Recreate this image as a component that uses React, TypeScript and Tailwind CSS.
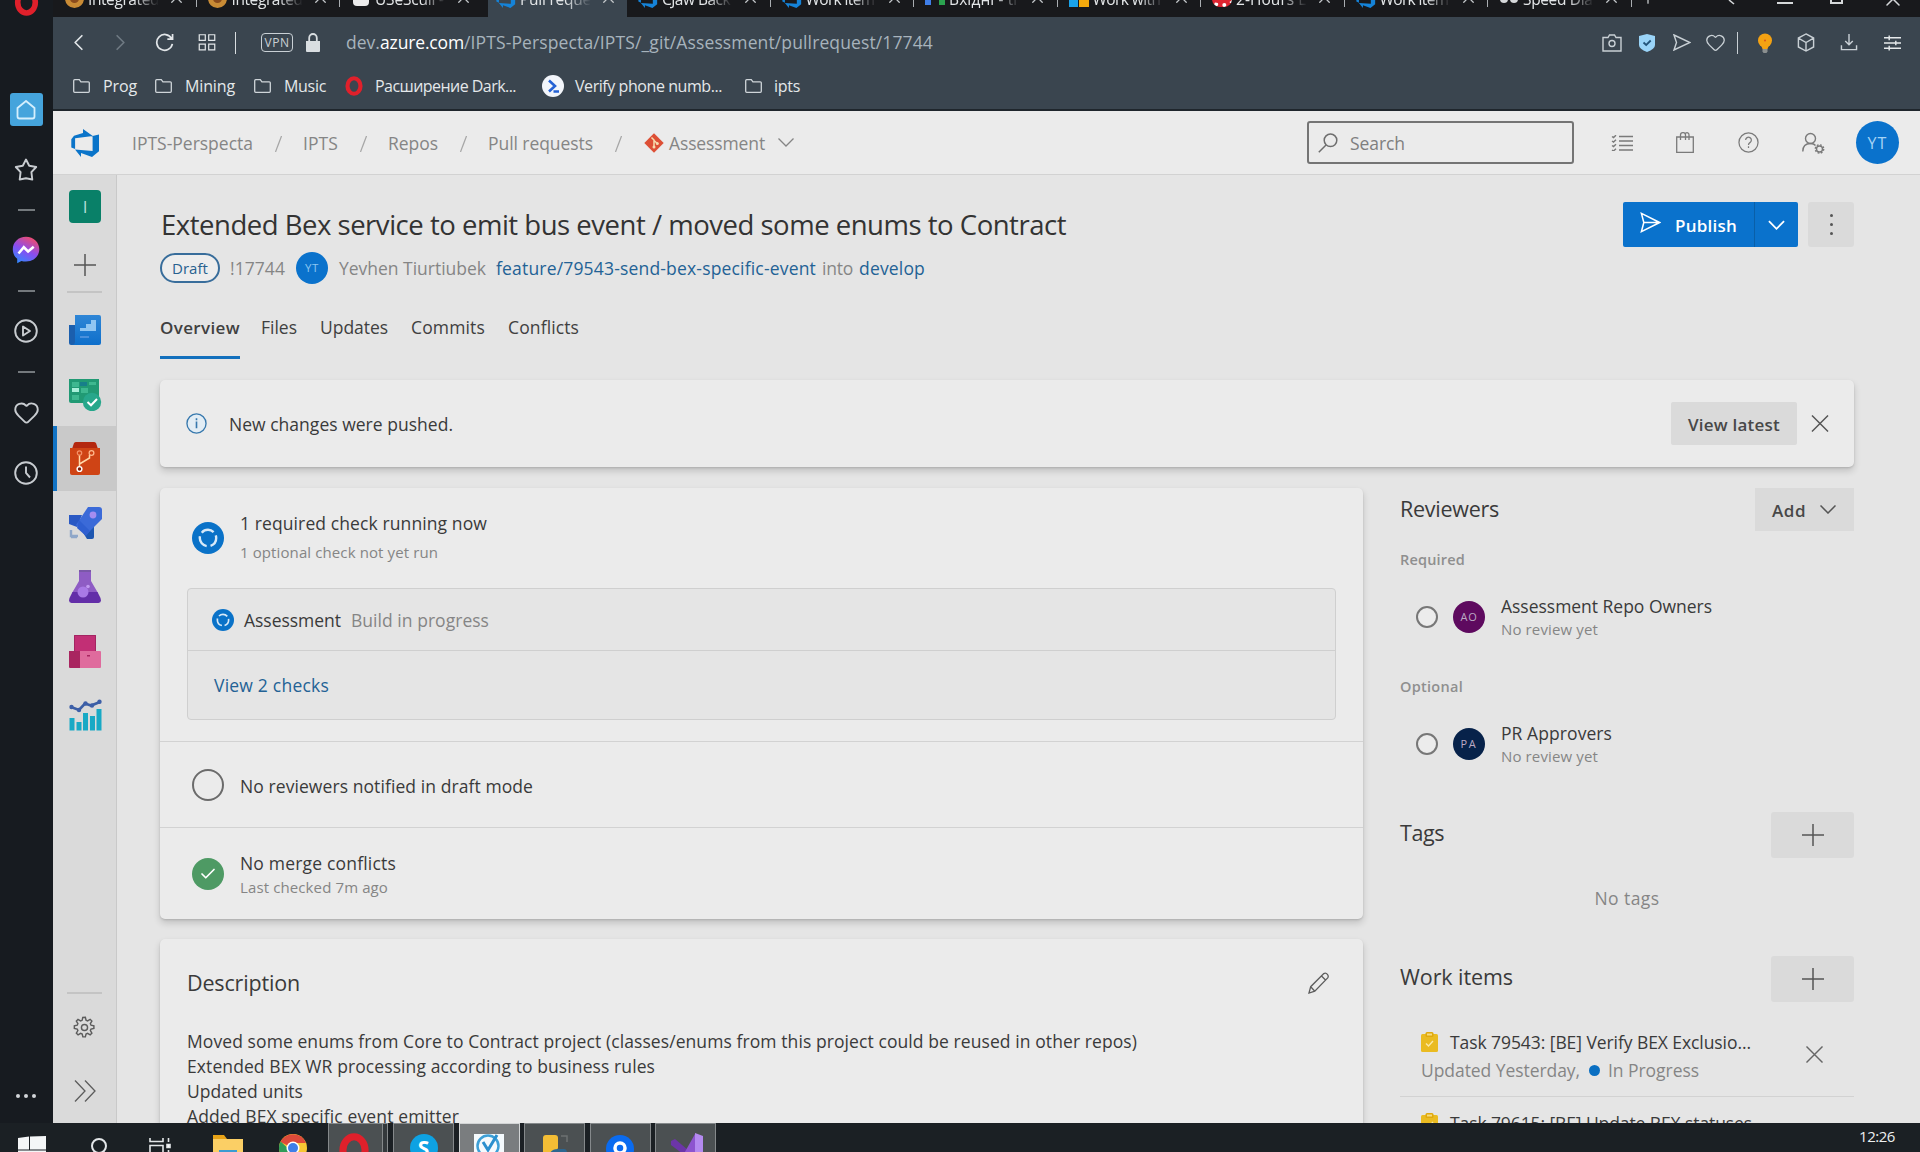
import React, { useLayoutEffect, useRef, useState } from "react";
import { Check, ChevronLeft, ChevronRight, Heart, Plus, X } from "lucide-react";

type TextProps = { w: number; children: string; className?: string };

/* Single-line label whose tracking adapts so that it fills the given width. */
function Label({ w, children, className = "" }: TextProps) {
  const ref = useRef<HTMLSpanElement>(null);
  const [spacing, setSpacing] = useState(0);
  useLayoutEffect(() => {
    if (ref.current) {
      const natural = ref.current.getBoundingClientRect().width;
      setSpacing((w - natural) / children.length);
    }
  }, [w, children]);
  return (
    <span className={"block shrink-0 whitespace-pre " + className} style={{ width: w }}>
      <span ref={ref} className="inline-block" style={{ letterSpacing: spacing + "px" }}>
        {children}
      </span>
    </span>
  );
}

/* ---------- icons ---------- */

const OperaO = ({ className = "" }) => (
  <svg viewBox="0 0 24 24" className={className}>
    <ellipse cx="12" cy="12" rx="7.8" ry="9.3" fill="none" stroke="#e0202b" strokeWidth="5" />
  </svg>
);

const AzureLogo = ({ className = "", color = "#0a74c9" }) => (
  <svg viewBox="0 0 29 28" className={className}>
    <path
      fill={color}
      d="M28 5.5v16.8L21 28l-11-3.9v3.8L4 20.6l17.6 1.3V6.9zM21.8 7 12 0v4L3 6.8.3 10.2v8.2l3.8 1.7V9.3z"
    />
  </svg>
);

const GitIcon = () => (
  <svg viewBox="0 0 20 20" className="h-5 w-5">
    <path fill="#dd4f35" d="M10 .3 19.7 10 10 19.7.3 10z" />
    <path d="M7.5 4.5 10 7v7M10 7.5l3.3 3" stroke="#f6dcae" strokeWidth="1.5" fill="none" />
    <circle cx="10" cy="14" r="1.5" fill="#f6dcae" />
    <circle cx="13.3" cy="10.6" r="1.5" fill="#f6dcae" />
  </svg>
);

const Messenger = () => (
  <svg viewBox="0 0 28 28" className="h-7 w-7">
    <defs>
      <linearGradient id="msg" x1="0.2" y1="1" x2="0.7" y2="0">
        <stop offset="0" stopColor="#2f8bff" />
        <stop offset="0.5" stopColor="#8a4df0" />
        <stop offset="1" stopColor="#f04c6c" />
      </linearGradient>
    </defs>
    <path fill="url(#msg)" d="M14 .8C6.300.8.8 6.300.8 13.300c0 4 1.700 7.300 4.400 9.500v4.400l4.200-2.300c1.400.4 3 .6 4.600.6 7.700 0 13.300-5.300 13.300-12.200S21.700.8 14 .8z" />
    <path d="m6.500 17.500 5.300-6.300 4.300 4.200 5.600-4.600" fill="none" stroke="#fff" strokeWidth="2.600" />
  </svg>
);

const BoardsOverview = () => (
  <svg viewBox="0 0 32 30" className="h-[30px] w-8">
    <defs>
      <linearGradient id="ov" x1="0" y1="0" x2="0" y2="1">
        <stop offset="0" stopColor="#2f86d6" />
        <stop offset="1" stopColor="#0e6fcb" />
      </linearGradient>
    </defs>
    <path fill="#1b5fae" d="M0 10h8v20H2q-2 0-2-2z" />
    <path fill="url(#ov)" d="M6 0h24q2 0 2 2v26q0 2-2 2H2q4 0 4-3z" />
    <path fill="#8fc5f2" d="M11 13h6v-4h5V5h5v11H11z" />
    <path fill="#4a90dc" d="M11 21h9v2h-9z" />
  </svg>
);

const BoardsIcon = () => (
  <svg viewBox="0 0 33 33" className="h-[33px] w-[33px]">
    <path fill="#219a74" d="M0 1h30v24H2q-2 0-2-2z" />
    <path fill="#3eb890" d="M3 4h7v5H3zM20 4h7v3h-7zM12 10h7v5h-7zM3 17h7v5H3z" />
    <path fill="#177f8a" d="M11 4h7v4h-7z" />
    <path fill="#a9f0da" d="M3 10h7v4H3z" />
    <circle cx="23" cy="24" r="9.200" fill="#27a78b" />
    <path d="m18.500 24 3.500 3.300 6-6.300" fill="none" stroke="#fff" strokeWidth="2" />
  </svg>
);

const ReposIcon = () => (
  <svg viewBox="0 0 30 33" className="h-[33px] w-[30px]">
    <path fill="#b4280f" d="M4 1q1-1 2-1h18q1 0 2 1l2 6H2z" />
    <path fill="#cf4415" d="M0 6h30v25q0 2-2 2H2q-2 0-2-2z" />
    <path d="M9.500 25v-3l10-6v-3M9.500 22V13" fill="none" stroke="#ffd7a8" strokeWidth="1.500" />
    <circle cx="9.500" cy="11" r="2.200" fill="#cf4415" stroke="#f49268" strokeWidth="1.200" />
    <circle cx="21.500" cy="11" r="2.400" fill="#cf4415" stroke="#ffb98d" strokeWidth="1.200" />
    <circle cx="9.500" cy="27" r="2.400" fill="#7c1c0c" stroke="#fff" strokeWidth="1.400" />
  </svg>
);

const PipelinesIcon = () => (
  <svg viewBox="0 0 33 33" className="h-[33px] w-[33px]">
    <path fill="#2a59c4" d="M0 9h13l-5 12-8-3z" />
    <path fill="#1d56b0" d="M13 25l12-6v12q0 2-2 2h-5z" />
    <path fill="#3b6ad8" d="M19 1h11q3 0 3 3v9L17 29 7 19z" />
    <path fill="#2f5fd0" d="M10 14 21 25l-4 5-9-8z" />
    <circle cx="24" cy="9" r="3.400" fill="#a58df0" />
    <path d="M2 24v6h7M2 31h6" fill="none" stroke="#8fa7c9" strokeWidth="2.400" />
  </svg>
);

const TestIcon = () => (
  <svg viewBox="0 0 32 33" className="h-[33px] w-8">
    <path fill="#8e5cc4" d="M10 0h12v11l7 12H3l7-12z" />
    <path fill="#7a58a8" d="M10 0h12v2H10z" />
    <path fill="#632ea8" d="M3.500 22h25l3 6q1.500 5-2 5H2.500Q-1 33 .5 28z" />
    <circle cx="14" cy="22" r="5.500" fill="#a979e6" />
    <circle cx="19" cy="16.500" r="1.800" fill="#c09af0" />
  </svg>
);

const ArtifactsIcon = () => (
  <svg viewBox="0 0 32 33" className="h-[33px] w-8">
    <path fill="#c22f75" d="M5 0h22v17H5z" />
    <path fill="#a92560" d="M0 16h12v17H1q-1 0-1-1z" />
    <path fill="#df6b9d" d="M11 16h20q1 0 1 1v15q0 1-1 1H11z" />
    <path d="M5.500 17V.5h21V16" stroke="#a32562" fill="none" />
    <path fill="#a92560" d="M18 20h3v1.500h-3z" />
  </svg>
);

const AnalyticsIcon = () => (
  <svg viewBox="0 0 33 32" className="h-8 w-[33px]">
    <path fill="#18a9c5" d="M.5 19h5v12.500h-5zM7.500 23h5v8.500h-5zM14 14h5v17.500h-5zM21 17h5v14.500h-5zM27.500 10h5v21.500h-5z" />
    <path d="m2 8 8 3 6-6.500 6 2L31 3" fill="none" stroke="#3c5fa5" strokeWidth="2.600" />
    <g fill="#3d5fa8">
      <circle cx="2.500" cy="8" r="2.200" />
      <circle cx="10" cy="11" r="2.200" />
      <circle cx="16.500" cy="4.500" r="2.200" />
      <circle cx="23" cy="6.500" r="2.200" />
      <circle cx="30.500" cy="2.800" r="2.200" />
    </g>
  </svg>
);

const Gear = () => (
  <svg viewBox="0 0 24 24" className="h-[23px] w-[23px]" fill="none" stroke="#5c5c5c" strokeWidth="1.500">
    <path d="m10.200 1.500-.7 3-1.600.7L5.200 3.600 3.500 5.300l1.600 2.700-.7 1.600-3 .7v2.600l3 .7.7 1.600-1.600 2.700 1.800 1.800 2.700-1.600 1.600.7.7 3h2.600l.7-3 1.600-.7 2.700 1.600 1.800-1.800-1.600-2.700.7-1.600 3-.7v-2.600l-3-.7-.7-1.600 1.600-2.700-1.800-1.800-2.700 1.600-1.600-.7-.7-3z" />
    <circle cx="12" cy="12" r="3.200" />
  </svg>
);

const Send = ({ className = "" }) => (
  <svg viewBox="0 0 22 22" className={className} fill="none" stroke="currentColor" strokeWidth="1.600">
    <path d="M1.500 1.500 20.500 11l-19 9.500L4 11zM4 11h16" />
  </svg>
);

const Progress = ({ className = "" }) => (
  <svg viewBox="0 0 32 32" className={className}>
    <circle cx="16" cy="16" r="16" fill="#0a72c8" />
    <circle cx="16" cy="16" r="8.200" fill="none" stroke="#d7e9f8" strokeWidth="2.400" strokeDasharray="13.200 3.970" strokeDashoffset="3" />
  </svg>
);

const TaskIcon = () => (
  <svg viewBox="0 0 17 20" className="h-5 w-[17px]">
    <rect y="2" width="17" height="18" rx="1.500" fill="#eabb21" />
    <rect x="4.500" y="0" width="8" height="5" rx="1.500" fill="#e0a90c" />
    <rect x="6" y="1.500" width="5" height="2" fill="#f6dc80" />
    <path d="m5 11.500 2.500 2.500 4.500-5" fill="none" stroke="#fbe9a8" strokeWidth="1.400" />
  </svg>
);

/* ---------- browser chrome ---------- */

const tabs: { icon: React.ReactNode; title: string; w: number; active?: boolean }[] = [
  { icon: <span className="block h-[19px] w-[19px] rounded-full border-[5px] border-[#c98b35] bg-[#8a4b1c]" />, title: "Integrated", w: 71 },
  { icon: <span className="block h-[19px] w-[19px] rounded-full border-[5px] border-[#c98b35] bg-[#8a4b1c]" />, title: "Integrated", w: 71 },
  { icon: <span className="block h-[17px] w-4 rounded-sm bg-[#ececec]" />, title: "USeScull - c", w: 80 },
  { icon: <AzureLogo className="h-[19px] w-5" color="#1583d8" />, title: "Pull reque", w: 71, active: true },
  { icon: <AzureLogo className="h-[19px] w-5" color="#1583d8" />, title: "CJaw Back", w: 68 },
  { icon: <AzureLogo className="h-[19px] w-5" color="#1583d8" />, title: "Work item", w: 69 },
  { icon: <span className="flex h-4 w-5 justify-between"><i className="w-1.5 bg-[#3f7ee8]" /><i className="w-1.5 bg-[#2ba34f]" /></span>, title: "Вхідні - th", w: 74 },
  { icon: <span className="flex h-[18px] w-5 gap-px"><i className="w-1/2 bg-[#1aa3ea]" /><i className="w-1/2 bg-[#f3a90d]" /></span>, title: "Work with", w: 68 },
  { icon: <span className="block h-[18px] w-5 rounded-b-lg border-b-4 border-dotted border-white bg-[#dd2430]" />, title: "2-Hours E", w: 71 },
  { icon: <AzureLogo className="h-[19px] w-5" color="#1583d8" />, title: "Work item", w: 69 },
  { icon: <span className="flex h-[14px] w-[18px] gap-0.5"><i className="w-1/2 rounded-sm bg-[#d6d8da]" /><i className="w-1/2 rounded-sm bg-[#d6d8da]" /></span>, title: "Speed Dial", w: 73 },
];

function TabStrip() {
  return (
    <div className="flex h-[17px] shrink-0 overflow-hidden bg-[#18191c] text-[#e3e6e8]">
      {tabs.map((t, i) => (
        <div
          key={i}
          className={"flex h-[17px] shrink-0 " + (t.active ? "ml-[4.500px] w-[139px] bg-[#3a454f]" : "w-[143.500px]")}
        >
          <div className={"-mt-[11px] flex w-[22px] justify-center " + (t.active ? "ml-[7px]" : "ml-[10px]")}>{t.icon}</div>
          <div className="-mt-[15px] ml-[3px] w-[71px] overflow-hidden [mask-image:linear-gradient(to_right,black_65%,transparent)]">
            <Label w={t.w} className="text-[15.500px] leading-[28px]">{t.title}</Label>
          </div>
          <X className="-mt-[12px] ml-[8px] h-[19px] w-[19px] text-[#c3c7ca]" strokeWidth={1.600} />
          {!t.active && i !== 2 && <div className="mb-auto ml-auto h-[7px] w-px bg-[#a9adb1]" />}
        </div>
      ))}
      <Plus className="-mt-[11px] ml-[7px] h-[18px] w-[18px]" strokeWidth={1.500} />
      <div className="mr-[15px] ml-auto flex">
        <svg viewBox="0 0 16 6" className="mr-[38px] h-1.5 w-4" fill="none" stroke="#d5d8da" strokeWidth="1.600"><path d="M6 0l5 4" /></svg>
        <div className="mt-[2px] mr-[37px] h-[2px] w-4 bg-[#d5d8da]" />
        <div className="-mt-[9px] mr-[38px] h-[13px] w-[13px] border-2 border-[#d5d8da]" />
        <X className="-mt-[13px] h-6 w-6 text-[#d5d8da]" strokeWidth={1.500} />
      </div>
    </div>
  );
}

function AddressBar() {
  return (
    <div className="flex h-[50px] shrink-0 items-center pt-px text-[#c9d0d5]">
      <ChevronLeft className="ml-[12px] h-[27px] w-[27px] text-[#e2e6e9]" strokeWidth={1.500} />
      <ChevronRight className="ml-[15px] h-[27px] w-[27px] text-[#6f7a83]" strokeWidth={1.500} />
      <svg viewBox="0 0 20 20" className="ml-[21px] h-[19px] w-[19px]" fill="none" stroke="#e2e6e9" strokeWidth="1.800">
        <path d="M17.500 6A8.300 8.300 0 1 0 18.300 11.500M18.500 1v5.500H13" />
      </svg>
      <svg viewBox="0 0 18 18" className="ml-[24px] h-[17px] w-[18px]" fill="none" stroke="#e2e6e9" strokeWidth="1.300">
        <path d="M.8.800h6.400v6H.8zM10.800.800h6.400v6h-6.400zM.8 10.800h6.400v6H.8zM10.800 10.800h6.400v6h-6.400z" />
      </svg>
      <div className="ml-[19px] h-[22px] w-px bg-[#d8dde0]" />
      <div className="ml-[25px] flex h-[19px] w-[32px] items-center justify-center rounded-sm border border-[#c9d0d5] text-xs">
        <Label w={25} className="text-center font-medium">VPN</Label>
      </div>
      <svg viewBox="0 0 14 19" className="ml-[13px] h-[19px] w-[14px]">
        <path fill="#d9dee1" d="M0 8h14v10q0 1-1 1H1q-1 0-1-1z" />
        <path d="M3.200 9V5a3.800 4 0 0 1 7.600 0v4" fill="none" stroke="#d9dee1" strokeWidth="1.800" />
      </svg>
      <div className="ml-[26px] flex text-[17.500px] text-[#a7b3bc]">
        <Label w={34}>dev.</Label>
        <Label w={84} className="font-medium text-white">azure.com</Label>
        <Label w={469}>/IPTS-Perspecta/IPTS/_git/Assessment/pullrequest/17744</Label>
      </div>
      <div className="mr-[19px] ml-auto flex items-center">
        <svg viewBox="0 0 20 18" className="h-[18px] w-5" fill="none" stroke="currentColor" strokeWidth="1.400">
          <path d="M1 3.500h5L7.500 1h5L14 3.500h5V17H1z" /><circle cx="10" cy="9.500" r="3" />
        </svg>
        <svg viewBox="0 0 16 18" className="ml-[17px] h-[18px] w-4">
          <path fill="#9ad4f8" d="M8 0l8 2v9q0 4-8 7-8-3-8-7V2z" />
          <path d="m4.500 8.500 2.700 2.500 4.500-4.500" fill="none" stroke="#23547a" strokeWidth="1.800" />
        </svg>
        <svg viewBox="0 0 18 17" className="ml-[18px] h-[17px] w-[18px]" fill="none" stroke="currentColor" strokeWidth="1.400"><path d="M1 1l16 7.500L1 16l2.500-7.500z" /></svg>
        <Heart className="ml-[14px] h-[21px] w-[21px]" strokeWidth={1.500} />
        <div className="ml-[11px] h-[22px] w-px bg-[#c9d0d5]" />
        <svg viewBox="0 0 16 20" className="ml-[19px] h-5 w-4">
          <circle cx="8" cy="7.500" r="7" fill="#f4a213" /><path fill="#f4a213" d="M4 12h8l-1.500 4h-5z" /><path fill="#8b8f8f" d="M5.500 16h5v2.500l-1 1.500h-3l-1-1.500z" /><circle cx="8" cy="7.500" r="1" fill="#d8541c" />
        </svg>
        <svg viewBox="0 0 18 20" className="ml-[24px] h-[19px] w-[18px]" fill="none" stroke="currentColor" strokeWidth="1.500"><path d="M9 1l8 4.300v9.400L9 19l-8-4.300V5.300zM1 5.300 9 10l8-4.700M9 10v9" /></svg>
        <svg viewBox="0 0 18 18" className="ml-[25px] h-[17px] w-[18px]" fill="none" stroke="currentColor" strokeWidth="1.500"><path d="M9 0v11M5 7.500l4 4 4-4M1 12v4.500h16V12" /></svg>
        <svg viewBox="0 0 18 16" className="ml-[26px] h-4 w-[17px]" fill="none" stroke="#e6eaec" strokeWidth="1.500"><path d="M0 2.500h18M0 8h18M0 13.500h18M5.500 0v5M12.500 5.500v5M5.500 11v5" /></svg>
      </div>
    </div>
  );
}

const BookmarkFolder = ({ className = "" }) => (
  <svg viewBox="0 0 17 14" className={"h-[14px] w-[17px] shrink-0 " + className} fill="none" stroke="#cfd5d9" strokeWidth="1.300">
    <path d="M.7 1.700q0-1 1-1h4.600l1.600 2.100h7.400q1 0 1 1v8.500q0 1-1 1H1.700q-1 0-1-1z" />
  </svg>
);

function Bookmarks() {
  return (
    <div className="flex h-[42px] shrink-0 items-center pb-[4px] text-[16px] text-[#e4e8ea]">
      <BookmarkFolder className="ml-[20px]" />
      <Label w={34} className="ml-[13px]">Prog</Label>
      <BookmarkFolder className="ml-[18px]" />
      <Label w={50} className="ml-[13px]">Mining</Label>
      <BookmarkFolder className="ml-[19px]" />
      <Label w={42} className="ml-[13px]">Music</Label>
      <OperaO className="ml-[18px] h-[22px] w-[20px]" />
      <Label w={141} className="ml-[11px]">Расширение Dark...</Label>
      <svg viewBox="0 0 22 22" className="ml-[26px] h-[22px] w-[22px]">
        <circle cx="11" cy="11" r="11" fill="#f2f5fa" /><path d="m7 5.500 6 5.500-6 5.500M11.500 16.500H17" fill="none" stroke="#2461d4" strokeWidth="2.600" />
      </svg>
      <Label w={147} className="ml-[11px]">Verify phone numb...</Label>
      <BookmarkFolder className="ml-[23px]" />
      <Label w={26} className="ml-[12px]">ipts</Label>
    </div>
  );
}

const Dash = () => <div className="h-0.5 w-[17px] shrink-0 bg-[#74797d]" />;

function OperaRail() {
  return (
    <aside className="flex w-[53px] shrink-0 flex-col items-center overflow-hidden bg-[#171b20] pr-px">
      <div className="flex h-[17px] items-end overflow-hidden">
        <OperaO className="mb-px h-[27px] w-[27px] shrink-0" />
      </div>
      <div className="mt-[76px] flex h-[33px] w-[33px] items-center justify-center rounded-[3px] bg-[#45a4dc]">
        <svg viewBox="0 0 20 20" className="h-5 w-5" fill="none" stroke="#d5effd" strokeWidth="1.800"><path d="M10 1l8.500 7v8.500q0 2-2 2h-13q-2 0-2-2V8z" /></svg>
      </div>
      <svg viewBox="0 0 24 24" className="mt-[32px] h-6 w-6" fill="none" stroke="#c8ccd0" strokeWidth="1.900" strokeLinejoin="round">
        <path d="m12 1.500 3.200 6.300 7 1.200-4.800 5.200.9 7.300L12 20.300l-6.300 1.200.9-7.300L1.800 9l7-1.200z" />
      </svg>
      <div className="mt-[27px]"><Dash /></div>
      <div className="mt-[25px]"><Messenger /></div>
      <div className="mt-[26px]"><Dash /></div>
      <svg viewBox="0 0 24 24" className="mt-[27px] h-6 w-6" fill="none" stroke="#c8ccd0" strokeWidth="1.900"><circle cx="12" cy="12" r="10.800" /><path d="M9 7.500v9l7-4.500z" strokeLinejoin="round" /></svg>
      <div className="mt-[28px]"><Dash /></div>
      <Heart className="mt-[26px] h-[27px] w-[27px] shrink-0 text-[#c8ccd0]" strokeWidth={1.700} />
      <svg viewBox="0 0 24 24" className="mt-[35px] h-6 w-6" fill="none" stroke="#c8ccd0" strokeWidth="1.900"><circle cx="12" cy="12" r="10.800" /><path d="M12 5.500V12l4 4.500" /></svg>
      <div className="mt-auto mb-[25px] flex gap-[4px]">
        <i className="h-1 w-1 rounded-full bg-[#d3d6d9]" /><i className="h-1 w-1 rounded-full bg-[#d3d6d9]" /><i className="h-1 w-1 rounded-full bg-[#d3d6d9]" />
      </div>
    </aside>
  );
}

/* ---------- Azure DevOps ---------- */

const Slash = ({ className = "" }) => (
  <svg viewBox="0 0 7 16" className={"h-4 w-[7px] shrink-0 " + className} stroke="#a6a6a6" strokeWidth="1.200"><path d="M6.500 0 .5 16" /></svg>
);

function Header() {
  return (
    <header className="flex h-[64px] shrink-0 items-center border-b border-[#d2d2d2] bg-[#ebebeb] text-[17.500px] text-[#858585]">
      <AzureLogo className="ml-[18px] h-7 w-[29px]" />
      <Label w={121} className="ml-[32px] pt-[2px]">IPTS-Perspecta</Label>
      <Slash className="ml-[22px] mt-[3px]" />
      <Label w={35} className="ml-[21px] pt-[2px]">IPTS</Label>
      <Slash className="ml-[22px] mt-[3px]" />
      <Label w={50} className="ml-[21px] pt-[2px]">Repos</Label>
      <Slash className="ml-[22px] mt-[3px]" />
      <Label w={105} className="ml-[21px] pt-[2px]">Pull requests</Label>
      <Slash className="ml-[22px] mt-[3px]" />
      <div className="ml-[22px]"><GitIcon /></div>
      <Label w={96} className="ml-[5px] pt-[2px]">Assessment</Label>
      <svg viewBox="0 0 16 9" className="ml-[13px] h-[9px] w-4" fill="none" stroke="#858585" strokeWidth="1.300"><path d="m.5.500 7.500 7.500L15.500.500" /></svg>
      <div className="mr-[21px] ml-auto flex items-center">
        <div className="flex h-[43px] w-[267px] items-center rounded-[3px] border-2 border-[#747474]">
          <svg viewBox="0 0 20 20" className="ml-[9px] h-5 w-5" fill="none" stroke="#6e6e6e" strokeWidth="1.500"><circle cx="12.500" cy="7.300" r="6.300" /><path d="M8 12 .8 19.200" /></svg>
          <Label w={55} className="ml-[12px] pt-[2px] text-[#7f7f7f]">Search</Label>
        </div>
        <svg viewBox="0 0 22 16" className="ml-[37px] h-4 w-[22px]" fill="none" stroke="#7a7a7a" strokeWidth="1.400">
          <path d="M8 1.500h14M8 6h14M8 10.500h14M8 15h14M1 1.500l1.500 1 2.500-2.300M1 6l1.500 1L5 4.700M1 10.500l1.500 1L5 9.200M1 15l1.500 1L5 13.700" />
        </svg>
        <svg viewBox="0 0 18 21" className="ml-[43px] h-[21px] w-[18px]" fill="none" stroke="#7a7a7a" strokeWidth="1.300">
          <path d="M.7 5h16.600v15.300H.7zM4.500 8V3q0-2.300 2.200-2.300h.6Q9.500.700 9.500 3v5M9.500 1q3.500-1 3.500 2v5" />
        </svg>
        <svg viewBox="0 0 22 22" className="ml-[44px] h-[21px] w-[21px]" fill="none" stroke="#7a7a7a" strokeWidth="1.300">
          <circle cx="11" cy="11" r="10" /><path d="M8 8.500a3 3 0 1 1 4.500 2.600q-1.500.9-1.500 2.600M11 15v1.700" />
        </svg>
        <svg viewBox="0 0 23 22" className="ml-[43px] h-[22px] w-[23px]" fill="none" stroke="#7a7a7a" strokeWidth="1.400">
          <circle cx="8.500" cy="6.500" r="5" /><path d="M.8 19.500q0-8 7.700-8 3.500 0 5 2" /><circle cx="17.500" cy="17" r="3" /><circle cx="17.500" cy="17" r="4.200" strokeDasharray="1.800 1.500" />
        </svg>
        <div className="ml-[31px] flex h-[43px] w-[43px] items-center justify-center rounded-full bg-[#0a72cc] text-[16px] text-[#a7d4f6]">
          <Label w={20}>YT</Label>
        </div>
      </div>
    </header>
  );
}

const navIcons = [BoardsOverview, BoardsIcon, ReposIcon, PipelinesIcon, TestIcon, ArtifactsIcon, AnalyticsIcon];

function ProjectNav() {
  return (
    <nav className="flex w-[64px] shrink-0 flex-col items-center overflow-hidden border-r border-[#c9c9c9] bg-[#dadada]">
      <div className="mt-[15px] ml-px flex h-[33px] w-[32px] shrink-0 items-center justify-center rounded-[4px] bg-[#098068] text-[17px] text-[#b5ded5]">I</div>
      <svg viewBox="0 0 22 22" className="mt-[31px] h-[22px] w-[22px] shrink-0" stroke="#555" strokeWidth="1.500"><path d="M11 0v22M0 11h22" /></svg>
      <div className="mt-[15px] h-0.5 w-[35px] shrink-0 bg-[#c4c4c4]" />
      <div className="mt-[5px] flex w-full flex-col">
        {navIcons.map((Icon, i) => (
          <div key={i} className={"flex h-[64.200px] items-center justify-center " + (i === 2 ? "border-l-[4px] border-[#1273c4] bg-[#c9c9c9] pr-[3px]" : "pl-px")}>
            <Icon />
          </div>
        ))}
      </div>
      <div className="mt-auto h-0.5 w-[35px] shrink-0 bg-[#c4c4c4]" />
      <div className="mt-[22px]"><Gear /></div>
      <svg viewBox="0 0 22 22" className="mt-[41px] mb-[21px] h-[22px] w-[22px] shrink-0" fill="none" stroke="#5c5c5c" strokeWidth="1.300"><path d="m1 .5 10 10.500L1 21.500M11 .5 21 11 11 21.500" /></svg>
    </nav>
  );
}

function TitleArea() {
  return (
    <div className="flex h-[205px] shrink-0 flex-col text-[17.500px]">
      <div className="mt-[27px] flex h-[46px]">
        <Label w={905} className="ml-px text-[27.500px] leading-[46px] text-[#333]">
          Extended Bex service to emit bus event / moved some enums to Contract
        </Label>
        <div className="ml-auto flex h-[45px] w-[175px] items-center rounded-[2px] bg-[#0a72cc] text-white">
          <Send className="ml-[17px] h-[21px] w-[21px] -translate-y-[2px]" />
          <Label w={62} className="ml-[14px] pt-[2px] text-[17px] font-semibold">Publish</Label>
          <div className="ml-[17px] h-full w-px bg-[#095fa8]" />
          <svg viewBox="0 0 18 10" className="ml-[13px] h-[10px] w-[17px]" fill="none" stroke="#fff" strokeWidth="1.900"><path d="m1 1 8 8 8-8" /></svg>
        </div>
        <div className="ml-[10px] flex h-[45px] w-[46px] flex-col items-center justify-center gap-[6px] rounded-[3px] bg-[#dadada]">
          <i className="h-[3px] w-[3px] rounded-full bg-[#555]" /><i className="h-[3px] w-[3px] rounded-full bg-[#555]" /><i className="h-[3px] w-[3px] rounded-full bg-[#555]" />
        </div>
      </div>
      <div className="mt-[3px] flex h-[34px] items-center text-[#858585]">
        <div className="flex h-[30px] w-[60px] items-center justify-center rounded-full border-2 border-[#386d9b] bg-[#ededed] text-[15px] text-[#28618f]">
          <Label w={36}>Draft</Label>
        </div>
        <Label w={55} className="ml-[10px] pt-px">!17744</Label>
        <div className="ml-[11px] flex h-8 w-8 items-center justify-center rounded-full bg-[#0a72cc] text-[11.500px] text-[#8cc6f2]"><Label w={14}>YT</Label></div>
        <Label w={147} className="ml-[11px] pt-px">Yevhen Tiurtiubek</Label>
        <Label w={320} className="ml-[10px] pt-px text-[#236295]">feature/79543-send-bex-specific-event</Label>
        <Label w={31} className="ml-[6px] pt-px">into</Label>
        <Label w={66} className="ml-[6px] pt-px text-[#236295]">develop</Label>
      </div>
      <div className="mt-[17px] flex h-[57px] leading-[51px] text-[#404040]">
        <div className="border-b-[3px] border-[#1370bd]"><Label w={80} className="text-[17px] font-semibold">Overview</Label></div>
        <Label w={36} className="ml-[21px]">Files</Label>
        <Label w={68} className="ml-[23px]">Updates</Label>
        <Label w={74} className="ml-[23px]">Commits</Label>
        <Label w={71} className="ml-[23px]">Conflicts</Label>
      </div>
    </div>
  );
}

function Banner() {
  return (
    <div className="flex h-[87px] shrink-0 items-center rounded-[5px] bg-[#ebebeb] shadow-[0_4px_7px_rgba(0,0,0,0.16),0_1px_2px_rgba(0,0,0,0.12)]">
      <svg viewBox="0 0 22 22" className="ml-[26px] h-[21px] w-[21px]" fill="none" stroke="#3678ad" strokeWidth="1.400"><circle cx="11" cy="11" r="10" fill="#e2edf5" /><path d="M11 9v7M11 5.500v2" strokeWidth="1.700" /></svg>
      <Label w={224} className="ml-[22px] pt-[2px] text-[17.500px] text-[#3a3a3a]">New changes were pushed.</Label>
      <div className="ml-auto flex h-[43px] w-[126px] items-center justify-center rounded-[2px] bg-[#dadada]">
        <Label w={92} className="pt-[2px] text-[17px] font-semibold text-[#484848]">View latest</Label>
      </div>
      <svg viewBox="0 0 18 18" className="mr-[25px] ml-[14px] h-[17px] w-[18px]" stroke="#555" strokeWidth="1.500"><path d="m.5.500 17 17M17.500.500l-17 17" /></svg>
    </div>
  );
}

function ChecksCard() {
  return (
    <section className="flex h-[431px] shrink-0 flex-col rounded-[5px] bg-[#ebebeb] text-[17.500px] text-[#3a3a3a] shadow-[0_4px_7px_rgba(0,0,0,0.16),0_1px_2px_rgba(0,0,0,0.12)]">
      <div className="flex h-[100px] items-center pl-8">
        <Progress className="h-8 w-8" />
        <div className="ml-4 flex flex-col pb-[2px]">
          <Label w={247} className="leading-[30px]">1 required check running now</Label>
          <Label w={198} className="text-[15px] leading-[28px] text-[#858585]">1 optional check not yet run</Label>
        </div>
      </div>
      <div className="mr-[27px] ml-[27px] h-[132px] rounded-[4px] border border-[#cfcfcf] bg-[#e5e5e5]">
        <div className="flex h-[62px] items-center border-b border-[#cfcfcf] pl-[24px]">
          <Progress className="h-[22px] w-[22px]" />
          <Label w={97} className="ml-[10px] pt-px">Assessment</Label>
          <Label w={138} className="ml-[10px] pt-px text-[#858585]">Build in progress</Label>
        </div>
        <div className="flex h-[68px] items-center pt-px pl-[26px]">
          <Label w={115} className="text-[#236295]">View 2 checks</Label>
        </div>
      </div>
      <div className="mt-[21px] flex h-[87px] items-center border-y border-[#d2d2d2] pl-8">
        <div className="h-8 w-8 rounded-full border-2 border-[#6b6b6b]" />
        <Label w={293} className="ml-4 pt-[3px]">No reviewers notified in draft mode</Label>
      </div>
      <div className="flex flex-1 items-center pl-8">
        <div className="flex h-8 w-8 items-center justify-center rounded-full bg-[#4e9a64] text-white"><Check className="h-[18px] w-[18px]" strokeWidth={2.300} /></div>
        <div className="ml-4 flex flex-col pt-px">
          <Label w={156} className="leading-[25px]">No merge conflicts</Label>
          <Label w={148} className="text-[15px] leading-[22px] text-[#858585]">Last checked 7m ago</Label>
        </div>
      </div>
    </section>
  );
}

function DescriptionCard() {
  return (
    <section className="mt-[20px] h-[400px] shrink-0 rounded-[5px] bg-[#ebebeb] pl-[27px] text-[17.500px] text-[#3a3a3a] shadow-[0_4px_7px_rgba(0,0,0,0.16),0_1px_2px_rgba(0,0,0,0.12)]">
      <div className="flex h-[88px] items-center">
        <Label w={113} className="pt-px text-[21.500px]">Description</Label>
        <svg viewBox="0 0 22 22" className="mr-[33px] ml-auto h-[22px] w-[22px]" fill="none" stroke="#5c5c5c" strokeWidth="1.300"><path d="M1 21l1.700-6.300L15.800 1.600q2-1.200 3.600.8 1.500 1.800.3 3.500L6.800 19.200zM13.500 4l4.500 4.500M2.700 14.700l4.100 4.500" /></svg>
      </div>
      <div className="mt-[2px] flex flex-col leading-[25.100px]">
        <Label w={950}>Moved some enums from Core to Contract project (classes/enums from this project could be reused in other repos)</Label>
        <Label w={468}>Extended BEX WR processing according to business rules</Label>
        <Label w={116}>Updated units</Label>
        <Label w={272}>Added BEX specific event emitter</Label>
      </div>
    </section>
  );
}

function Reviewer({ name, w, initials, color }: { name: string; w: number; initials: string; color: string }) {
  return (
    <div className="flex h-[64px] items-center pl-4">
      <div className="h-[22px] w-[22px] rounded-full border-2 border-[#777] bg-[#ececec]" />
      <div className={"ml-[15px] flex h-8 w-8 items-center justify-center rounded-full text-[11px] text-[#bba9c4] " + color}><Label w={17}>{initials}</Label></div>
      <div className="ml-[16px] flex flex-col">
        <Label w={w} className="leading-[24px] text-[#3a3a3a]">{name}</Label>
        <Label w={97} className="text-[15px] leading-[23px] text-[#858585]">No review yet</Label>
      </div>
    </div>
  );
}

const PlusButton = () => (
  <div className="ml-auto flex h-[46px] w-[83px] items-center justify-center rounded-[3px] bg-[#dadada]">
    <svg viewBox="0 0 22 22" className="h-[22px] w-[22px]" stroke="#555" strokeWidth="1.500"><path d="M11 0v22M0 11h22" /></svg>
  </div>
);

function WorkItem({ title, w }: { title: string; w: number }) {
  return (
    <div className="flex h-[81px] items-center border-b border-[#d2d2d2]">
      <div className="ml-[21px] flex flex-col">
        <div className="flex h-[28px] items-center">
          <TaskIcon />
          <Label w={w} className="ml-[12px] text-[#3a3a3a]">{title}</Label>
        </div>
        <div className="flex h-[28px] items-center text-[#858585]">
          <Label w={159}>Updated Yesterday,</Label>
          <i className="ml-[9px] h-[11px] w-[11px] rounded-full bg-[#0a6fc2]" />
          <Label w={91} className="ml-[8px]">In Progress</Label>
        </div>
      </div>
      <svg viewBox="0 0 18 18" className="mr-[31px] mb-[4px] ml-auto h-[17px] w-[17px]" stroke="#666" strokeWidth="1.500"><path d="m.5.500 17 17M17.500.500l-17 17" /></svg>
    </div>
  );
}

function SidePanel() {
  return (
    <aside className="ml-[37px] flex w-[454px] shrink-0 flex-col text-[17.500px]">
      <div className="flex h-[43px] items-center">
        <Label w={99} className="text-[21.500px] text-[#3a3a3a]">Reviewers</Label>
        <div className="ml-auto flex h-[43px] w-[99px] items-center bg-[#dadada]">
          <Label w={34} className="ml-[17px] pt-[2px] text-[17px] font-semibold text-[#484848]">Add</Label>
          <svg viewBox="0 0 16 9" className="ml-[14px] h-[9px] w-4" fill="none" stroke="#555" strokeWidth="1.500"><path d="m.5.500 7.500 7.500L15.500.500" /></svg>
        </div>
      </div>
      <Label w={65} className="mt-[15px] text-[14.500px] leading-[28px] font-semibold text-[#8f8f8f]">Required</Label>
      <div className="mt-[11px]"><Reviewer name="Assessment Repo Owners" w={211} initials="AO" color="bg-[#5e0a5f]" /></div>
      <Label w={63} className="mt-[24px] text-[14.500px] leading-[28px] font-semibold text-[#8f8f8f]">Optional</Label>
      <div className="mt-[11px]"><Reviewer name="PR Approvers" w={111} initials="PA" color="bg-[#07224a]" /></div>
      <div className="mt-[36px] flex h-[46px] items-center">
        <Label w={44} className="pb-[4px] text-[21.500px] text-[#3a3a3a]">Tags</Label>
        <PlusButton />
      </div>
      <div className="mt-[26px] flex h-7 justify-center leading-7 text-[#858585]"><Label w={65}>No tags</Label></div>
      <div className="mt-[44px] flex h-[46px] items-center">
        <Label w={113} className="pb-[3px] text-[21.500px] text-[#3a3a3a]">Work items</Label>
        <PlusButton />
      </div>
      <div className="mt-[14px] flex flex-col">
        <WorkItem title="Task 79543: [BE] Verify BEX Exclusio..." w={301} />
        <WorkItem title="Task 79615: [BE] Update BEX statuses" w={302} />
      </div>
    </aside>
  );
}

/* ---------- taskbar ---------- */

const TaskButton = ({ children, active = false }: { children: React.ReactNode; active?: boolean }) => (
  <div className={"mr-[4.500px] flex h-full w-[61px] shrink-0 justify-center border-x border-t " + (active ? "border-[#d2d4d5] bg-[#7a7d7f]" : "border-[#85898b] bg-[#4b5052]")}>
    {children}
  </div>
);

function Taskbar() {
  return (
    <footer className="flex h-[29px] shrink-0 overflow-hidden bg-[#1b2024]">
      <svg viewBox="0 0 28 28" className="mt-[13px] ml-[18px] h-7 w-7 shrink-0" fill="#f4f6f7"><path d="M0 2l11-1.500v13H0zM12 .4 28 0v13.500H12zM0 14.500h28V28L0 26z" /></svg>
      <svg viewBox="0 0 18 18" className="mt-[15px] ml-[44px] h-[18px] w-[18px] shrink-0" fill="none" stroke="#e3e6e8" strokeWidth="2"><circle cx="9" cy="8" r="7" /></svg>
      <svg viewBox="0 0 22 20" className="mt-[15px] ml-[41px] h-5 w-[22px] shrink-0" fill="none" stroke="#e3e6e8" strokeWidth="1.600"><path d="M1 0v3.500h13V0M1 20V7.500h13V20M19.500 0v4M19.500 12v8" /><path fill="#fff" d="M18 6.500h3v3h-3z" /></svg>
      <svg viewBox="0 0 30 22" className="mt-[12px] ml-[42px] h-[22px] w-[30px] shrink-0"><path fill="#e8a317" d="M0 0h11l3 4v5H0z" /><path fill="#fbcf65" d="M0 4h30v18H0z" /><path fill="#3b9bd2" d="M6 15h18v7H6z" /></svg>
      <svg viewBox="0 0 28 28" className="mt-[11px] ml-[36px] h-7 w-7 shrink-0">
        <circle cx="14" cy="14" r="14" fill="#f7c633" /><path fill="#dd4a3a" d="M14 14 1.500 8A14 14 0 0 1 27 9H14z" /><path fill="#2f9c58" d="M1.600 7.500A14 14 0 0 0 14 28l-1-10z" /><circle cx="14" cy="14" r="6.500" fill="#fff" /><circle cx="14" cy="14" r="5" fill="#3f7fe8" />
      </svg>
      <div className="ml-[21px] flex h-full w-[55px] shrink-0 justify-center border-x border-t border-[#85898b] bg-[#4b5052]">
        <OperaO className="mt-[9px] mr-[3px] h-[34px] w-[34px] shrink-0" />
      </div>
      <div className="mr-[5px] h-full w-[5px] border-t border-r border-[#85898b] bg-[#34393c]" />
      <TaskButton>
        <div className="mt-[10px] flex h-7 w-7 justify-center rounded-full bg-[#0ea2e3] text-[21px] leading-[28px] font-bold text-white">S</div>
      </TaskButton>
      <TaskButton active>
        <svg viewBox="0 0 32 30" className="mt-[9px] h-[30px] w-8"><path fill="#f5fafd" d="M1 1h30v29H1z" /><circle cx="15" cy="13" r="10.500" fill="none" stroke="#3d9fd6" strokeWidth="2.500" /><path d="m10 9 5 8L24 2" fill="none" stroke="#2b8fce" strokeWidth="3" /></svg>
      </TaskButton>
      <TaskButton>
        <svg viewBox="0 0 32 28" className="mt-[10px] mr-[2px] h-7 w-8"><path fill="#f4bd35" d="M5 4q0-3 3-3h9q3 0 3 3v10l-8 14H5z" /><path fill="#2d6690" d="M12 19q2-4 8-4h6q3 0 3 4v9H12z" /><path d="M23 2h6v6" fill="none" stroke="#6d7072" strokeWidth="1.500" /></svg>
      </TaskButton>
      <TaskButton>
        <svg viewBox="0 0 28 28" className="mt-[11px] h-7 w-7"><circle cx="14" cy="14" r="14" fill="#0a6bf0" /><circle cx="14" cy="13" r="5" fill="none" stroke="#fff" strokeWidth="3.500" /></svg>
      </TaskButton>
      <TaskButton>
        <svg viewBox="0 0 32 30" className="mt-[9px] ml-[2px] h-[30px] w-8"><path fill="#6c35a8" d="M0 8l4-2 20 17v7L0 12z" /><path fill="#8d54cf" d="M10 26 24 1v29z" /><path fill="#b48af0" d="M24 0l8 3v27h-8z" /></svg>
      </TaskButton>
      <div className="mr-[25px] ml-auto text-[15px] leading-[27px] text-[#eceff0]"><Label w={36}>12:26</Label></div>
    </footer>
  );
}

export default function App() {
  return (
    <div className="flex h-[1152px] w-[1920px] flex-col overflow-hidden bg-[#171b20] font-['Open_Sans',sans-serif]">
      <div className="flex h-[1123px] shrink-0 overflow-hidden">
        <OperaRail />
        <div className="flex min-w-0 flex-1 flex-col">
          <TabStrip />
          <div className="flex h-[94px] shrink-0 flex-col border-b-2 border-[#1f262c] bg-[#3a454f]">
            <AddressBar />
            <Bookmarks />
          </div>
          <Header />
          <div className="flex h-[948px] shrink-0 overflow-hidden">
            <ProjectNav />
            <main className="flex flex-1 flex-col overflow-hidden bg-[#e5e5e5] pr-[66px] pl-[43px]">
              <TitleArea />
              <Banner />
              <div className="mt-[21px] flex items-start">
                <div className="flex w-[1203px] shrink-0 flex-col">
                  <ChecksCard />
                  <DescriptionCard />
                </div>
                <SidePanel />
              </div>
            </main>
          </div>
        </div>
      </div>
      <Taskbar />
    </div>
  );
}
